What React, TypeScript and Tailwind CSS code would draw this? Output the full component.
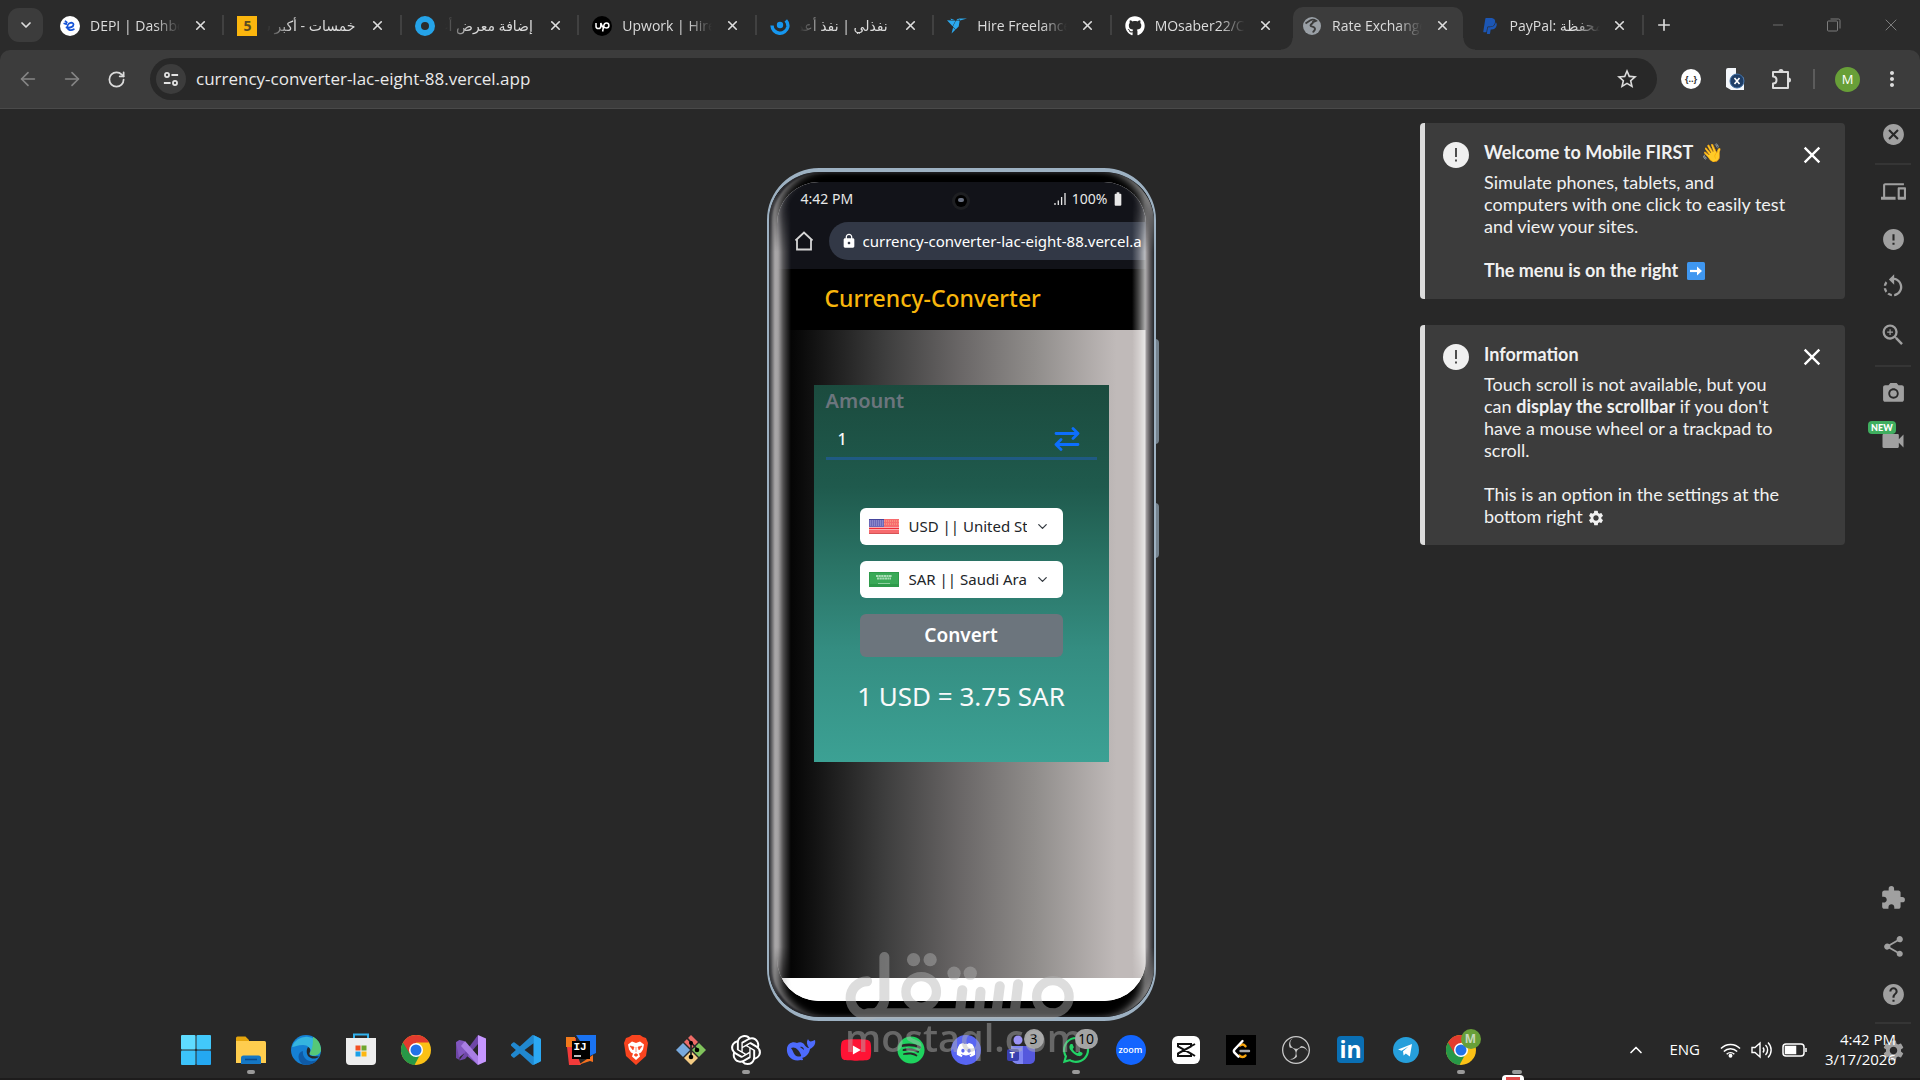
import type { ReactNode } from "react";
import { FaGithub, FaPaypal, FaWhatsapp, FaYoutube, FaSpotify, FaDiscord } from "react-icons/fa";
import { SiFreelancer, SiObsstudio, SiOpenai } from "react-icons/si";
import {
  MdCancel, MdDevices, MdError, MdRotateLeft, MdZoomIn, MdPhotoCamera, MdVideocam,
  MdExtension, MdShare, MdHelp, MdSettings, MdStarBorder, MdMoreVert,
  MdClose, MdLock, MdBatteryFull,
} from "react-icons/md";
import { ArrowLeft, ArrowRight, ChevronDown, ChevronUp, Minus, Plus, RotateCw, X } from "lucide-react";

/* ---------- browser tabs ---------- */

type Tab = { title: string; icon: ReactNode; rtl?: boolean; active?: boolean; divider?: boolean };

const tabs: Tab[] = [
  {
    title: "DEPI | Dashboard",
    divider: true,
    icon: (
      <svg viewBox="0 0 20 20" className="size-5">
        <circle cx="10" cy="10" r="10" fill="#fff" />
        <path d="M6.500 11.500c3.500.8 7-.6 7-3 0-1.600-1.500-2-3-1.600-2 .5-3.400 2.600-3 4.600.4 2.700 3.600 3.500 6.300 1.700M4.300 7.500l2 .6M5.500 5.300l1.300 1.200" fill="none" stroke="#1553d8" strokeWidth="1.800" strokeLinecap="round" />
      </svg>
    ),
  },
  {
    title: "خمسات - أكبر سوق",
    rtl: true,
    divider: true,
    icon: <span className="flex size-5 items-center justify-center bg-[#fbb60e] text-sm font-bold text-[#5a4a22]">5</span>,
  },
  {
    title: "إضافة معرض أعمال",
    rtl: true,
    divider: true,
    icon: <span className="block size-5 rounded-full border-[6px] border-[#25a3e8]" />,
  },
  {
    title: "Upwork | Hire Freelancers",
    divider: true,
    icon: (
      <svg viewBox="0 0 20 20" className="size-5">
        <circle cx="10" cy="10" r="10" fill="#000" />
        <path d="M4 7v3.200a2.400 2.400 0 0 0 4.800 0V7c.8 2.300 2 4.300 3.300 5.300M10.600 15.500l1.200-5.800c.4-1.800 1.400-2.700 2.600-2.700a2.500 2.500 0 0 1 0 5c-1.100 0-2-.6-2.800-1.500" fill="none" stroke="#fff" strokeWidth="1.500" />
      </svg>
    ),
  },
  {
    title: "نفذلي | نفذ أعمالك",
    rtl: true,
    divider: true,
    icon: (
      <svg viewBox="0 0 20 20" className="size-5">
        <path d="M2 9.500a8 8 0 0 0 15.800 1.500c.4-2.500-.4-5-2-6.700" fill="none" stroke="#1697f0" strokeWidth="3.400" />
        <circle cx="10" cy="9" r="3.200" fill="#1697f0" />
      </svg>
    ),
  },
  { title: "Hire Freelancers", divider: true, icon: <SiFreelancer className="size-5 text-[#2ba9ee]" /> },
  { title: "MOsaber22/Currency", icon: <FaGithub className="size-5 text-white" /> },
  {
    title: "Rate Exchange",
    active: true,
    icon: (
      <svg viewBox="0 0 18 18" className="size-[18px]">
        <circle cx="9" cy="9" r="9" fill="#9aa0a6" />
        <path d="M2.500 6.500 7 3.500c2-1.200 4.500-.8 6 .3l-3 1.200c0 2-2.500 1.800-2.500 3.600 0 1.600 4.500.4 4.500 3.400 0 1.400-1.500 2-2 3.500" fill="none" stroke="#3c3c3c" strokeWidth="1.900" />
      </svg>
    ),
  },
  {
    title: "PayPal: محفظة",
    divider: true,
    icon: <FaPaypal className="size-[18px] text-[#1c56b4]" />,
  },
];

function BrowserTab({ tab }: { tab: Tab }) {
  return (
    <div className="flex min-w-0 flex-1 items-stretch pt-[7px]">
      <div className={tab.active ? "relative ml-1 flex min-w-0 flex-1 rounded-t-[10px] bg-[#3c3c3c] pb-1.5" : "ml-1 flex min-w-0 flex-1 pb-1.5"}>
        {tab.active && (
          <>
            <span className="absolute bottom-0 -left-3 size-3 bg-[radial-gradient(circle_at_0_0,transparent_11px,#3c3c3c_12px)]" />
            <span className="absolute -right-3 bottom-0 size-3 bg-[radial-gradient(circle_at_100%_0,transparent_11px,#3c3c3c_12px)]" />
          </>
        )}
        <button className="flex min-w-0 flex-1 items-center pl-[9px] text-left">
          <span className="flex w-5 shrink-0 justify-center">{tab.icon}</span>
          <span
            dir={tab.rtl ? "rtl" : "ltr"}
            className={
              tab.rtl
                ? "ml-2.5 w-[88px] overflow-hidden whitespace-nowrap [mask-image:linear-gradient(to_left,#000_72%,transparent)]"
                : "ml-2.5 w-[90px] overflow-hidden whitespace-nowrap [mask-image:linear-gradient(to_right,#000_72%,transparent)]"
            }
          >
            {tab.title}
          </span>
        </button>
        <button aria-label={"Close " + tab.title} className="mr-2.5 flex w-5 items-center justify-center text-[#dedede]">
          <X className="size-[15px]" strokeWidth={2.600} />
        </button>
      </div>
      <span className={tab.divider ? "mt-2 ml-0.5 h-5 w-0.5 bg-[#414141]" : "ml-0.5 w-0.5"} />
    </div>
  );
}

function BrowserHeader() {
  return (
    <header className="bg-[#2b2b2b] text-sm text-[#dcdcdc]">
      <div className="flex h-[50px]">
        <button aria-label="Search tabs" className="mt-2 ml-2 flex h-[34px] w-[35px] shrink-0 items-center justify-center rounded-[11px] bg-[#3c3c3c]">
          <ChevronDown className="size-4" strokeWidth={2.600} />
        </button>
        <div className="ml-1 flex w-[1597px] min-w-0">
          {tabs.map((tab) => (
            <BrowserTab key={tab.title} tab={tab} />
          ))}
        </div>
        <button aria-label="New tab" className="ml-2 flex w-6 items-center justify-center">
          <Plus className="size-[18px]" strokeWidth={2.200} />
        </button>
        <div className="ml-auto flex text-[#7d7d7d]">
          <button aria-label="Minimize" className="flex w-14 items-center justify-center"><Minus className="size-4" strokeWidth={1.200} /></button>
          <button aria-label="Restore" className="flex w-14 items-center justify-center">
            <svg viewBox="0 0 14 14" className="size-3.5" fill="none" stroke="currentColor">
              <rect x=".5" y="3" width="10" height="10" rx="1" />
              <path d="M3.500 1h8a1.500 1.500 0 0 1 1.500 1.500v8" />
            </svg>
          </button>
          <button aria-label="Close window" className="flex w-[58px] items-center justify-center"><X className="size-5" strokeWidth={1.200} /></button>
        </div>
      </div>
      <div className="flex h-[59px] items-center rounded-t-[10px] border-b border-[#4a4a4a] bg-[#3c3c3c] pr-4 pl-[17px]">
        <button aria-label="Back" className="mr-[22px] text-[#858585]"><ArrowLeft className="size-[22px]" strokeWidth={1.800} /></button>
        <button aria-label="Forward" className="mr-6 text-[#858585]"><ArrowRight className="size-[22px]" strokeWidth={1.800} /></button>
        <button aria-label="Reload" className="mr-6"><RotateCw className="size-[19px]" strokeWidth={2.200} /></button>
        <div className="flex h-[42px] flex-1 items-center rounded-full bg-[#282828] pr-[18px] pl-1.5">
          <button aria-label="Site information" className="flex size-[30px] items-center justify-center rounded-full bg-[#3c3c3c]">
            <svg viewBox="0 0 18 18" className="size-4" fill="none" stroke="#e3e3e3" strokeWidth="2">
              <circle cx="4.500" cy="4.500" r="2.300" /><path d="M9.500 4.500H17M1 13.500h7.500" /><circle cx="13.500" cy="13.500" r="2.300" />
            </svg>
          </button>
          <input aria-label="Address" readOnly value="currency-converter-lac-eight-88.vercel.app" className="ml-2.5 min-w-0 flex-1 bg-transparent text-[17px] text-[#eaeaea] outline-none" />
          <button aria-label="Bookmark"><MdStarBorder className="size-6" /></button>
        </div>
        <button aria-label="JSON extension" className="ml-6 flex size-5 items-center justify-center rounded-full bg-white text-[9px] font-bold text-[#333]">{"{..}"}</button>
        <button aria-label="Document extension" className="ml-6">
          <svg viewBox="0 0 20 22" className="h-[22px] w-5">
            <path d="M1 2a2 2 0 0 1 2-2h8v6l8 4v12H6l-5-3z" fill="#f4f7fb" />
            <circle cx="12" cy="13" r="7" fill="#1f3e66" stroke="#3f6ea3" />
            <path d="m9.500 10 5 6m0-6-5 6" stroke="#fff" strokeWidth="1.600" />
          </svg>
        </button>
        <button aria-label="Extensions" className="ml-6">
          <svg viewBox="0 0 24 24" className="size-6" fill="none" stroke="currentColor" strokeWidth="2">
            <path d="M4 5h15v16H4v-4.500c2.500 0 3.500-1.500 3.500-3.500S6.500 9.500 4 9.500z" strokeLinejoin="round" />
            <path d="M9.500 4.500a2.500 2.500 0 0 1 5 0zM19.500 10.500a2.500 2.500 0 0 1 0 5z" fill="currentColor" stroke="none" />
          </svg>
        </button>
        <span className="ml-5 h-5 w-0.5 bg-[#5c5c5c]" />
        <button aria-label="Profile" className="ml-5 flex size-[25px] items-center justify-center rounded-full bg-[#689f38] text-[13px] text-white">M</button>
        <button aria-label="Menu" className="ml-5"><MdMoreVert className="size-6" /></button>
      </div>
    </header>
  );
}

/* ---------- simulated phone ---------- */

function UsFlag() {
  return (
    <svg viewBox="0 0 30 15" className="h-[15px] w-[30px] shrink-0">
      <rect width="30" height="15" fill="#f76b6e" />
      <path d="M0 8.500h30M0 10.500h30" stroke="#fff" strokeOpacity=".8" strokeWidth=".7" />
      <path d="M15 2h15M15 5h15" stroke="#f6b98e" strokeDasharray="1 1" />
      <path d="M0 9.500h30" stroke="#ee2b35" strokeWidth="1.200" />
      <rect width="15" height="8" fill="#6b68b8" />
      <path d="M1 2h13M1 4h13M1 6h13" stroke="#a9a6dc" strokeDasharray="1 1" />
      <path d="M0 .3h15" stroke="#2a2a86" strokeWidth=".7" />
      <path d="M0 14.700h30" stroke="#b23c3c" strokeWidth=".6" />
    </svg>
  );
}

function SaFlag() {
  return (
    <svg viewBox="0 0 30 15" className="h-[15px] w-[30px] shrink-0">
      <rect width="30" height="15" fill="#2e9a4a" />
      <rect x="1" y="1" width="28" height="11" fill="#3aa957" />
      <path d="M7 4h16M8 6.500h14" stroke="#a9dcb6" strokeWidth="1.800" strokeDasharray="2.200 .4" />
      <path d="M9 11.500h12" stroke="#a5dbb2" strokeWidth=".8" />
    </svg>
  );
}

function CurrencySelect({ flag, label, value }: { flag: ReactNode; label: string; value: string }) {
  return (
    <div className="relative flex h-[37px] items-center rounded-md bg-white pl-[9px]">
      {flag}
      <select aria-label={label} className="ml-2.5 h-full w-[118px] appearance-none overflow-hidden bg-transparent text-[15px] text-[#212529] outline-none">
        <option>{value}</option>
      </select>
      <ChevronDown className="pointer-events-none ml-2 size-[15px] text-[#343a40]" strokeWidth={2} />
    </div>
  );
}

function Phone() {
  return (
    <div className="relative h-[853px] w-[389px]">
      <span className="absolute top-[171px] -right-[3px] h-[105px] w-1 rounded-r-sm bg-[#75838f]" />
      <span className="absolute top-[335px] -right-[3px] h-[55px] w-1 rounded-r-sm bg-[#75838f]" />
      <div className="relative flex h-full flex-col overflow-hidden rounded-[52px] border-2 border-t-[4px] border-b-[4px] border-[#9db1c2] bg-black px-2 pt-2.5 pb-4">
        <div className="flex min-h-0 flex-1 flex-col overflow-hidden rounded-[42px] bg-white">
          <div className="relative flex h-[34px] shrink-0 items-center bg-[#121319] pr-5 pl-6 text-sm text-[#e8e8e8]">
            <span>4:42 PM</span>
            <span className="absolute top-2.5 left-[175px] flex size-[18px] items-center justify-center rounded-full bg-[#1e1f22]">
              <span className="flex size-3 items-start justify-center rounded-full bg-black pt-[3px]"><span className="h-1 w-1.5 rounded-full bg-[#6c7384]" /></span>
            </span>
            <svg viewBox="0 0 12 12" className="ml-auto h-3 w-3"><path d="M1 12v-2M4.300 12V7.500M7.600 12V4M11 12V0" stroke="currentColor" strokeWidth="1.300" /></svg>
            <span className="ml-1.5">100%</span>
            <MdBatteryFull className="ml-0.5 size-4" />
          </div>
          <div className="flex h-[53px] shrink-0 items-start bg-[#121319] pt-1.5 pl-[17px]">
            <svg viewBox="0 0 20 20" className="mt-[9px] size-5 shrink-0" fill="none" stroke="#d5d5d5" strokeWidth="1.800"><path d="M1.500 9.500 10 1.500l8.500 8M3 8.500V18.500h14V8.500" /></svg>
            <div className="ml-[15px] flex h-[38px] min-w-0 flex-1 items-center rounded-l-full rounded-r-[18px] bg-[#323846] pr-1 pl-3 whitespace-nowrap text-white">
              <MdLock className="size-4 shrink-0" />
              <span className="ml-1.5 min-w-0 overflow-hidden text-[15px]">currency-converter-lac-eight-88.vercel.app</span>
            </div>
          </div>
          <div className="flex h-[61px] shrink-0 items-center bg-black pb-0.5 pl-12">
            <h1 className="text-[23px] font-medium text-[#f8b60c]">Currency-Converter</h1>
          </div>
          <div className="flex-1 bg-[linear-gradient(to_right,#050505_4%,#121212_10%,#3d3d3d_29%,#6a6767_50%,#908d8b_70%,#c0bab9_92%)] px-[37px] pt-[55px]">
            <form className="flex h-[377px] flex-col bg-[linear-gradient(#1b4b3e,#1f5a4d_27%,#2a7466_48%,#348d81_70%,#3ca194)] px-3 text-[#f8f9fa]">
              <label htmlFor="amount" className="mt-0.5 h-7 text-xl leading-7 font-semibold text-[#6c757d]">Amount</label>
              <div className="flex h-[45px] items-center justify-between border-b-[3px] border-[#1f5a83] pt-1.5 pr-[17px] pl-3">
                <input id="amount" defaultValue="1" className="w-40 bg-transparent text-base font-medium outline-none" />
                <button type="button" aria-label="Swap currencies">
                  <svg viewBox="0 0 26 24" className="h-6 w-[26px]" fill="none" stroke="#0d6efd" strokeWidth="2.800" strokeLinecap="round" strokeLinejoin="round">
                    <path d="M2 6.500h22M19 1.500l5 5-5 5M24 17.500H2M7 12.500l-5 5 5 5" />
                  </svg>
                </button>
              </div>
              <div className="mx-[34px] mt-12 flex flex-col">
                <CurrencySelect flag={<UsFlag />} label="From currency" value="USD || United States Dollar" />
                <div className="h-4" />
                <CurrencySelect flag={<SaFlag />} label="To currency" value="SAR || Saudi Arabian Riyal" />
                <button type="button" className="mt-4 h-[43px] rounded-md bg-[#6c757d] text-[19px] font-semibold text-white">Convert</button>
              </div>
              <output className="mt-5 text-center text-[26px] whitespace-nowrap">1 USD = 3.75 SAR</output>
            </form>
          </div>
          <div className="h-[23px] shrink-0 bg-white" />
        </div>
        {/* glass reflections along the curved edges */}
        <div className="pointer-events-none absolute inset-0 rounded-[50px] shadow-[inset_2px_0_2px_1px_rgba(30,30,34,0.9),inset_12px_0_9px_-4px_rgba(190,188,190,0.7),inset_-12px_0_9px_-5px_rgba(235,235,235,0.6)]" />
        <div className="pointer-events-none absolute inset-0 rounded-[50px] bg-[linear-gradient(to_right,#2c2e33_0,#6b6b6d_3px,#a9a7a8_6px,rgba(170,168,169,0.95)_9px,rgba(130,128,129,0.6)_14px,transparent_22px,transparent_calc(100%-22px),rgba(255,255,255,0.35)_calc(100%-14px),rgba(255,255,255,0.6)_calc(100%-9px),#a3a0a2_calc(100%-8px),#5b595c_calc(100%-4px),#25272b_100%)] [mask-image:linear-gradient(transparent_20px,#000_80px,#000_calc(100%-70px),transparent_calc(100%-20px))]" />
      </div>
    </div>
  );
}

/* ---------- notices and side menu ---------- */

function Notice({ title, children }: { title: ReactNode; children: ReactNode }) {
  return (
    <section className="flex w-[425px] rounded border-l-[5px] border-[#dcdcdc] bg-[#3c3c3c] py-[18px] pl-[18px] text-[#f1f1f1]">
      <span className="mt-px flex size-[26px] shrink-0 items-center justify-center rounded-full bg-[#f0f0f0]">
        <svg viewBox="0 0 4 14" className="h-3.5 w-1" stroke="#3c3c3c" strokeWidth="1.800"><path d="M2 0v9M2 11.500v2" /></svg>
      </span>
      <div className="ml-[15px] w-[312px] shrink-0 text-lg leading-[22px]">
        <h2 className="mb-2 font-bold">{title}</h2>
        {children}
      </div>
      <button aria-label="Dismiss" className="ml-0.5 self-start"><MdClose className="size-7 text-white" /></button>
    </section>
  );
}

function RightArrowBadge() {
  return (
    <svg viewBox="0 0 18 18" className="ml-1 inline size-[18px] align-[-3px]" role="img" aria-label="right arrow">
      <rect width="18" height="18" rx="1.500" fill="#3f97f0" />
      <path d="M3 9h8.500" stroke="#fff" strokeWidth="2.200" />
      <path d="m10 4.500 5 4.500-5 4.500z" fill="#fff" />
    </svg>
  );
}

function SideButton({ label, children }: { label: string; children: ReactNode }) {
  return (
    <button aria-label={label} className="relative flex h-12 w-full items-center justify-center text-[25px]">
      {children}
    </button>
  );
}

function SideMenu() {
  return (
    <nav className="flex w-[54px] flex-col items-center pt-px text-[#a0a0a0]">
      <SideButton label="Close simulator"><MdCancel /></SideButton>
      <hr className="mt-[5px] mb-0.5 w-9 border-t-2 border-[#353535]" />
      <SideButton label="Devices"><MdDevices /></SideButton>
      <SideButton label="Alerts"><MdError /></SideButton>
      <SideButton label="Rotate"><MdRotateLeft className="size-7" /></SideButton>
      <SideButton label="Zoom"><MdZoomIn className="size-7" /></SideButton>
      <hr className="mt-1.5 mb-0.5 w-9 border-t-2 border-[#353535]" />
      <SideButton label="Screenshot"><MdPhotoCamera /></SideButton>
      <SideButton label="Record video">
        <MdVideocam className="size-7" />
        <span className="absolute top-1 left-0.5 rounded-sm bg-[#3fae5f] px-[3px] text-[9px] leading-[13px] font-black text-white">NEW</span>
      </SideButton>
      <div className="mt-auto" />
      <SideButton label="Add-ons"><MdExtension className="size-[26px]" /></SideButton>
      <SideButton label="Share"><MdShare /></SideButton>
      <SideButton label="Help"><MdHelp /></SideButton>
      <hr className="mt-1 mb-0.5 w-9 border-t-2 border-[#353535]" />
      <div className="mb-1.5 w-full"><SideButton label="Settings"><MdSettings /></SideButton></div>
    </nav>
  );
}

/* ---------- taskbar ---------- */

function ChromeIcon() {
  return (
    <svg viewBox="0 0 30 30" className="size-[30px]">
      <circle cx="15" cy="15" r="15" fill="#fbc116" />
      <path d="M15 15 2 7.500A15 15 0 0 0 13.500 30L20 18z" fill="#279847" />
      <path d="M15 8h13.200A15 15 0 0 0 2 7.500L8.900 19z" fill="#e33b2e" />
      <path d="M15 8h13.200" stroke="#fbc116" />
      <circle cx="15" cy="15" r="7" fill="#fff" />
      <circle cx="15" cy="15" r="5.500" fill="#2372e8" />
    </svg>
  );
}

type App = { name: string; icon: ReactNode; running?: boolean };

const apps: App[] = [
  {
    name: "Start",
    icon: (
      <svg viewBox="0 0 30 30" className="size-[30px]">
        <rect width="14.500" height="14.500" rx="1" fill="#5fdcff" /><rect x="15.500" width="14.500" height="14.500" rx="1" fill="#42c8fb" />
        <rect y="15.500" width="14.500" height="14.500" rx="1" fill="#3cc3fa" /><rect x="15.500" y="15.500" width="14.500" height="14.500" rx="1" fill="#24a8f1" />
      </svg>
    ),
  },
  {
    name: "File Explorer",
    running: true,
    icon: (
      <svg viewBox="0 0 30 28" className="h-7 w-[30px]">
        <path d="M0 2a1.500 1.500 0 0 1 1.500-1.500h8L13 4v10H0z" fill="#e5a50d" />
        <path d="M0 5h28.500A1.500 1.500 0 0 1 30 6.500V27H0z" fill="#ffcd4e" />
        <path d="M5 28v-6a2.500 2.500 0 0 1 2.500-2.500h15A2.500 2.500 0 0 1 25 22v6z" fill="#1577c4" />
        <path d="M9 23.500h12" stroke="#0a4b8c" strokeWidth="1.500" />
      </svg>
    ),
  },
  {
    name: "Edge",
    icon: (
      <svg viewBox="0 0 30 30" className="size-[30px]">
        <circle cx="15" cy="15" r="15" fill="#1580d4" />
        <path d="M1 12A15 15 0 0 1 30 14c0 4-3 6.500-7 6.500-3 0-5-1-4-3 1-4-2-7.500-7-7.500-5 0-9 2-11 2z" fill="#35b4df" />
        <path d="M22 1.700A15 15 0 0 1 30 14c0 4-3 6.500-7 6.500-3 0-5-1-4-3 3-4 3-10 3-15.800z" fill="#56c878" />
        <path d="M12 16c-1 6 4 11 10 10 2 0 4-1 5-2A15 15 0 0 1 12 29.500C6 26 6 17 12 16z" fill="#0f5aa6" />
        <path d="M17 12c4 2 2 5 1.500 6s0 2.500 2.500 3l7 .5c-3 3-8 2.500-10.500 0-2.500-3-2-7-.5-9.500z" fill="#282828" />
      </svg>
    ),
  },
  {
    name: "Store",
    icon: (
      <svg viewBox="0 0 30 34" className="mb-0.5 h-[34px] w-[30px]">
        <path d="M8 7V2.500h14V7" fill="none" stroke="#31b2ee" strokeWidth="2" />
        <path d="M0 6h30v23a4 4 0 0 1-4 4H4a4 4 0 0 1-4-4z" fill="#eee" />
        <rect x="9.500" y="13.500" width="5" height="5" fill="#f25022" /><rect x="15.500" y="13.500" width="5" height="5" fill="#6fa52c" />
        <rect x="9.500" y="19.500" width="5" height="5" fill="#1ba0e8" /><rect x="15.500" y="19.500" width="5" height="5" fill="#fdb813" />
      </svg>
    ),
  },
  { name: "Chrome", icon: <ChromeIcon /> },
  {
    name: "Visual Studio",
    icon: (
      <svg viewBox="0 0 30 30" className="size-[30px]">
        <path d="M0 7 3.500 5v20L0 23z" fill="#6d45a6" />
        <path d="M0 7.500 3.500 5 8 6l15 17-1 7-14-11.500-5 4z" fill="#8257bf" />
        <path d="M3.500 25 22 0v9L9 24l-5.500 1.500z" fill="#6f46a8" />
        <path d="m9 6 13 15v9L5 11z" fill="#a97ee4" />
        <path d="m22 0 8 3.500v23L22 30z" fill="#c697ff" />
      </svg>
    ),
  },
  {
    name: "VS Code",
    icon: (
      <svg viewBox="0 0 24 24" className="size-[30px]">
        <path fill="#2188cf" d="M23.150 2.587 18.210.21a1.494 1.494 0 0 0-1.705.29l-9.460 8.630-4.120-3.128a.999.999 0 0 0-1.276.057L.327 7.261A1 1 0 0 0 .326 8.740L3.899 12 .326 15.260a1 1 0 0 0 .001 1.479L1.650 17.940a.999.999 0 0 0 1.276.057l4.120-3.128 9.460 8.630a1.492 1.492 0 0 0 1.704.29l4.942-2.377A1.500 1.500 0 0 0 24 20.060V3.939a1.500 1.500 0 0 0-.85-1.352zm-5.146 14.861L10.826 12l7.178-5.448v10.896z" />
        <path fill="#2ba8f3" d="M18.200.2 23.200 2.600a1.500 1.500 0 0 1 .8 1.300v16.200a1.500 1.500 0 0 1-.8 1.300l-5 2.400z" />
      </svg>
    ),
  },
  {
    name: "IntelliJ IDEA",
    icon: (
      <span className="relative block size-[30px]">
        <svg viewBox="0 0 30 30" className="size-[30px]">
          <path d="M0 3h10v14l5 13H3z" fill="#f23a3a" /><path d="M0 2h9v10H0z" fill="#f27a1c" />
          <path d="m10 0h20v18l-6 3z" fill="#1a73f2" /><path d="M12 30 27 20v7l-3-1z" fill="#f4701f" />
          <rect x="6" y="6" width="18" height="18" />
          <path d="M8 21h7" stroke="#fff" strokeWidth="1.500" />
        </svg>
        <span className="absolute top-1.5 left-2 font-['Liberation_Mono'] text-[11px] leading-3 font-bold text-white">IJ</span>
      </span>
    ),
  },
  {
    name: "Brave",
    icon: (
      <svg viewBox="0 0 30 30" className="size-[30px]">
        <path d="m8 2 3-2h8l3 2 3 1 2 5-2 13-10 9-10-9L3 8l2-5z" fill="#f9441f" />
        <path d="m15 8 4-1.500 4 3-1 5-2 3-2 1 1 3-4 3.500-4-3.500 1-3-2-1-2-3-1-5 4-3z" fill="#fff" />
        <path d="m9 11 4 1-1 3zM21 11l-4 1 1 3zM13 20l2-1.500 2 1.500-2 1.500zM15 12v5" fill="#f9441f" stroke="#f9441f" strokeWidth=".6" />
      </svg>
    ),
  },
  {
    name: "Git",
    icon: (
      <svg viewBox="0 0 30 30" className="size-[30px]">
        <path d="m15 0 7 7-7 7-7-7z" fill="#ee6b66" /><path d="m7 8 7 7-7 7-7-7z" fill="#78a9dd" />
        <path d="m23 8 7 7-7 7-7-7z" fill="#80c35c" /><path d="m15 16 7 7-7 7-7-7z" fill="#f4cb84" />
        <path d="M15 6v18M11 3l10 11" stroke="#282828" strokeWidth="1.800" />
        <circle cx="15" cy="8" r="2" /><circle cx="15" cy="22" r="2.300" /><circle cx="21" cy="15" r="2.300" />
      </svg>
    ),
  },
  { name: "ChatGPT", running: true, icon: <SiOpenai className="size-[30px] text-white" /> },
  {
    name: "DeepSeek",
    icon: (
      <svg viewBox="0 0 30 24" className="h-6 w-[30px]">
        <path d="M1 10c1-5 6-7 10-5 2-1 5-1 7 1 1 2 3 4 5 4-2-3-3-6-1-9 1 3 3 3 7 1 1 4-1 7-5 9-1 5-4 8-8 9 2 1 1 3-1 2-9 2-15-4-14-12z" fill="#4d6bfe" />
        <path d="M5 10c4-2 8 2 10 7 1 2-4 2-6 0s-2-5-4-7z" fill="#282828" /><path d="M14 9c2-1 4 1 4 3z" fill="#282828" />
      </svg>
    ),
  },
  {
    name: "YouTube",
    icon: <span className="relative block"><FaYoutube className="relative size-8 text-[#ff1335]" /><span className="absolute inset-[11px] -z-10 bg-white" /></span>,
  },
  { name: "Spotify", icon: <FaSpotify className="size-7 text-[#1ed35e]" /> },
  {
    name: "Discord",
    icon: <span className="flex size-[30px] items-center justify-center rounded-full bg-[#5865f2]"><FaDiscord className="size-5 text-white" /></span>,
  },
  {
    name: "Teams",
    icon: (
      <span className="relative block size-[30px]">
        <svg viewBox="0 0 30 30" className="size-[30px]">
          <circle cx="12" cy="5" r="4.500" fill="#9b93f5" /><path d="M12 11h14a3 3 0 0 1 3 3v10a5 5 0 0 1-5 5H12z" fill="#5558dd" />
          <path d="M5 11h12v18h-5a7 7 0 0 1-7-7z" fill="#7f85f2" /><rect x="1" y="14" width="12" height="12" rx="2" fill="#3a3fae" />
        </svg>
        <span className="absolute top-[14px] left-1 text-[9px] leading-3 font-bold text-white">T</span>
        <span className="absolute -top-1.5 left-[18px] flex size-5 items-center justify-center rounded-full bg-[#a3a3a3] text-sm text-black">3</span>
      </span>
    ),
  },
  {
    name: "WhatsApp",
    running: true,
    icon: (
      <span className="relative block size-[30px]">
        <FaWhatsapp className="size-[30px] text-[#22d366]" />
        <span className="absolute -top-1.5 left-3.5 flex h-5 w-[23px] items-center justify-center rounded-full bg-[#a3a3a3] text-sm text-black">10</span>
      </span>
    ),
  },
  {
    name: "Zoom",
    icon: <span className="flex size-[30px] items-center justify-center rounded-full bg-[#1365ff] text-[9px] font-semibold text-white">zoom</span>,
  },
  {
    name: "CapCut",
    icon: (
      <svg viewBox="0 0 28 28" className="size-7">
        <rect width="28" height="28" rx="6" fill="#fff" />
        <path d="M23 8 6 17.500V20h13v-2.500L6 10.500V8h13v2.500L6 17.500M19 17.500l4 2.500" fill="none" stroke="#111" strokeWidth="2" />
      </svg>
    ),
  },
  {
    name: "LeetCode",
    icon: (
      <span className="flex size-[30px] items-center justify-center bg-black">
        <svg viewBox="0 0 24 24" className="size-6" fill="none" strokeWidth="2.400" strokeLinecap="round">
          <path d="M16.500 17.500c-1.500 2-4.500 2-6 0" stroke="#f5a30c" /><path d="M11 7.500c2-1.500 4-1 5.500.8" stroke="#f5a30c" />
          <path d="m13.500 3-8 8.500c-1 1.200-1 2 0 3.200l4 4" stroke="#fff" /><path d="M11.500 13H20" stroke="#aaa" />
        </svg>
      </span>
    ),
  },
  { name: "OBS", icon: <SiObsstudio className="size-[28px] text-[#c9c9c9]" /> },
  {
    name: "LinkedIn",
    icon: <span className="flex size-[27px] items-center justify-center rounded-sm bg-[#0a6fb4] text-[23px] font-bold text-white">in</span>,
  },
  {
    name: "Telegram",
    icon: (
      <svg viewBox="0 0 26 26" className="size-[26px]">
        <circle cx="13" cy="13" r="13" fill="#269fdb" /><path d="m5 12.500 14-5.500-2.200 12.500-4-3-2.200 2-.6-4.300 5.500-4.700-7 4.200z" fill="#fff" />
      </svg>
    ),
  },
  {
    name: "Chrome profile M",
    running: true,
    icon: (
      <span className="relative block">
        <ChromeIcon />
        <span className="absolute -top-1.5 left-[15px] flex size-5 items-center justify-center rounded-full bg-[#689f38] text-xs font-bold text-[#c9d8bb]">M</span>
      </span>
    ),
  },
];

function Taskbar() {
  return (
    <footer className="absolute inset-x-0 bottom-0 flex h-[59px] border-b-2 border-[#1d1c1c] pl-[168px] text-white">
      {apps.map((app) => (
        <button key={app.name} aria-label={app.name} className="relative isolate flex h-[57px] w-[55px] items-center justify-center">
          {app.icon}
          {app.running && <span className="absolute bottom-1 h-1 w-2 rounded-full bg-[#9a9a9a]" />}
        </button>
      ))}
      <button aria-label="Snipping Tool" className="relative h-[57px] w-[42px] overflow-visible">
        <span className="absolute bottom-1 left-6 h-1 w-2.5 rounded-full bg-[#9a9a9a]" />
        <span className="absolute -bottom-0.5 left-3.5 h-[5px] w-[22px] rounded-t-sm border-x-4 border-t-2 border-white bg-[#e04848]" />
      </button>
      <div className="mr-6 ml-auto flex items-center text-[15px]">
        <button aria-label="Show hidden icons" className="mr-[23px]"><ChevronUp className="size-5" strokeWidth={2} /></button>
        <span className="mr-5">ENG</span>
        <svg viewBox="0 0 22 16" className="mr-2.5 h-4 w-[21px]" fill="none" stroke="currentColor" strokeWidth="1.500">
          <path d="M1 6.500a14 14 0 0 1 20 0M4 9.500a10 10 0 0 1 14 0M7 12.500a5.500 5.500 0 0 1 8 0" /><circle cx="11" cy="14" r="1.300" fill="currentColor" />
        </svg>
        <svg viewBox="0 0 21 18" className="mr-2.5 h-[18px] w-[21px]" fill="none" stroke="currentColor" strokeWidth="1.400">
          <path d="M1 6.500h3l5-4.500v14l-5-4.500H1zM12 6.500a4 4 0 0 1 0 5M14.500 4a7 7 0 0 1 0 10M17 1.500a10.500 10.500 0 0 1 0 15" />
        </svg>
        <svg viewBox="0 0 25 14" className="h-3.5 w-[25px]" fill="none" stroke="currentColor" strokeWidth="1.500">
          <rect x="1" y="1" width="21" height="12" rx="3" /><rect x="3.500" y="3.500" width="10" height="7" fill="currentColor" /><path d="M24 5v4" />
        </svg>
        <div className="-mt-0.5 ml-[18px] text-right leading-5"><p>4:42 PM</p><p>3/17/2026</p></div>
      </div>
    </footer>
  );
}

function Watermark() {
  return (
    <div className="pointer-events-none absolute bottom-[22px] left-[845px] z-10 w-[230px] opacity-45">
      <svg viewBox="285 155 690 205" className="h-[68px] w-[230px]" fill="none" stroke="#b4b4b4" strokeWidth="30" strokeLinecap="round" strokeLinejoin="round">
        <path d="M402 170V290A51 51 0 1 1 350 243" />
        <path d="M352 340H910" strokeWidth="31" />
        <circle cx="513" cy="275" r="46" strokeWidth="28" /><circle cx="910" cy="290" r="49" strokeWidth="28" />
        <path d="M637 270 630 335M692 275l-5 60M750 258 740 335M805 252 795 335" />
        <g fill="#b4b4b4" stroke="none"><circle cx="490" cy="178" r="20" /><circle cx="540" cy="178" r="20" /><circle cx="612" cy="219" r="20" /><circle cx="661" cy="219" r="20" /></g>
      </svg>
      <p className="-mt-1 text-center font-['Open_Sans',sans-serif] text-[38px] leading-[42px] font-semibold text-[#b4b4b4]">mostaql.com</p>
    </div>
  );
}

export default function App() {
  return (
    <div className="relative flex min-h-screen flex-col bg-[#282828] font-['Open_Sans','DejaVu_Sans',sans-serif]">
      <BrowserHeader />
      <main className="grid flex-1 grid-cols-[1fr_auto_1fr]">
        <div />
        <div className="mt-[59px] mb-[59px] ml-0.5 font-['Noto_Sans',sans-serif]"><Phone /></div>
        <div className="flex justify-end font-['Lato',sans-serif]">
          <div className="mt-3.5 mr-[21px] flex flex-col gap-[26px]">
            <Notice title={<>Welcome to Mobile FIRST&nbsp; 👋</>}>
              <p>Simulate phones, tablets, and computers with one click to easily test and view your sites.</p>
              <p className="mt-[22px] font-bold">The menu is on the right <RightArrowBadge /></p>
            </Notice>
            <Notice title="Information">
              <p>Touch scroll is not available, but you can <b>display the scrollbar</b> if you don't have a mouse wheel or a trackpad to scroll.</p>
              <p className="mt-[22px]">This is an option in the settings at the bottom right <MdSettings className="inline size-[18px]" /></p>
            </Notice>
          </div>
          <SideMenu />
        </div>
      </main>
      <Taskbar />
      <Watermark />
    </div>
  );
}
